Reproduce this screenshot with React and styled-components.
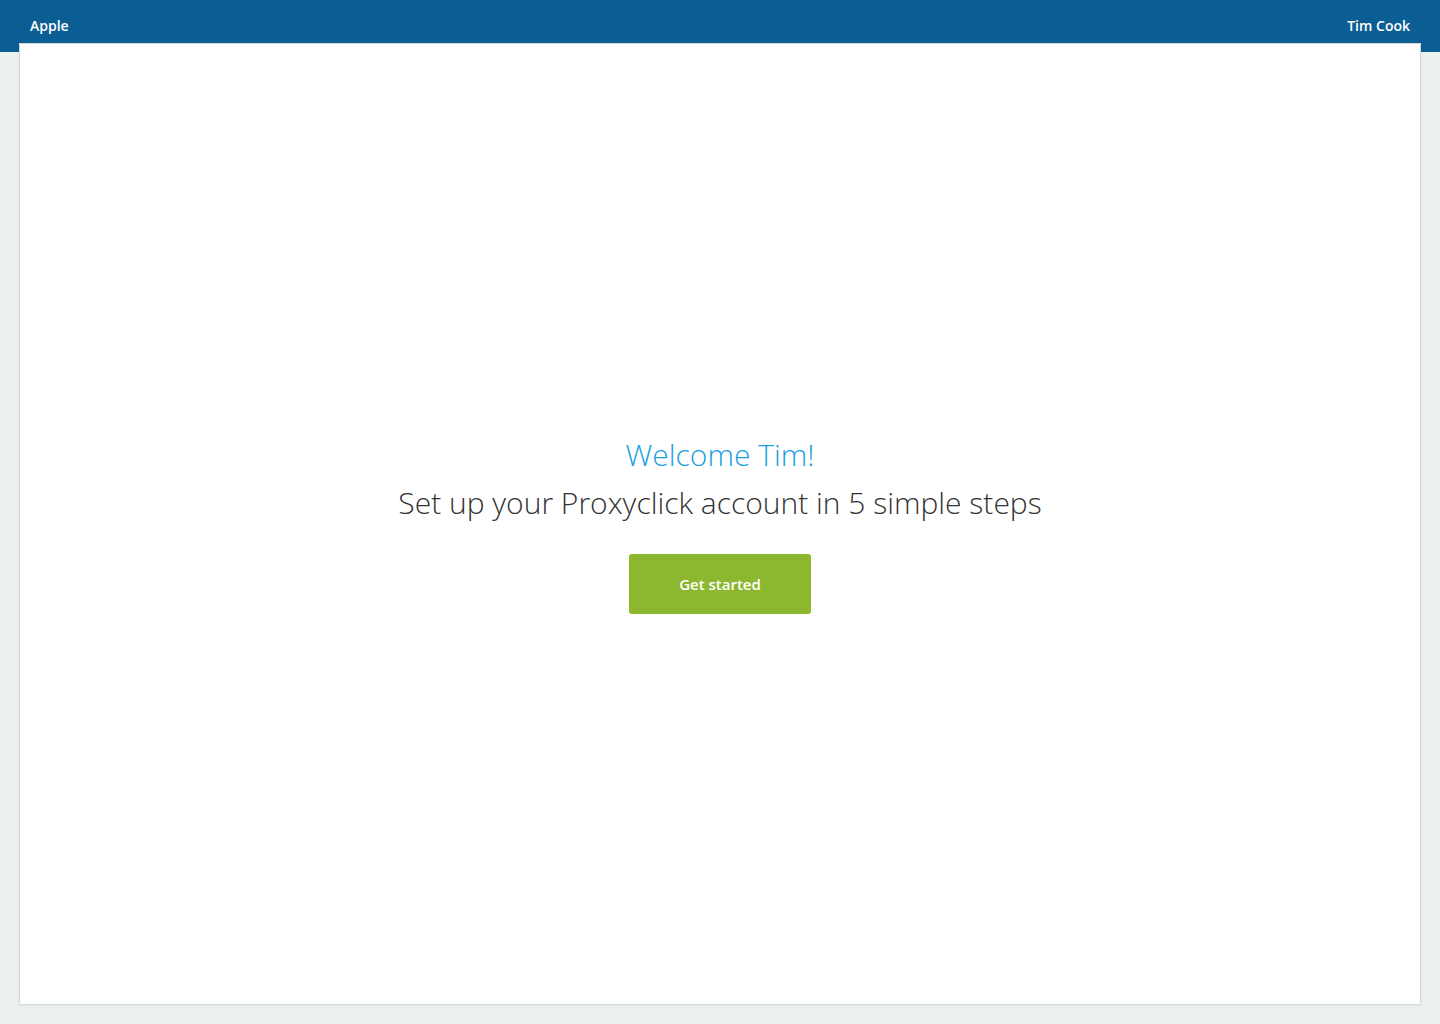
import React from 'react';
import styled, { createGlobalStyle } from 'styled-components';

const GlobalStyle = createGlobalStyle`
  html, body {
    margin: 0;
    padding: 0;
    background: #ecf0f1;
    font-family: "Open Sans", "Liberation Sans", sans-serif;
  }
  * { box-sizing: border-box; }
`;

const Page = styled.div`
  min-height: 1024px;
  display: flex;
  flex-direction: column;
`;

const TopBar = styled.header`
  background: #0b5e93;
  height: 52px;
  padding: 0 30px;
  display: flex;
  align-items: center;
  justify-content: space-between;
  color: #ffffff;
  font-size: 14px;
  font-weight: 600;
`;

const BarLabel = styled.span`
  line-height: 20px;
`;

const Panel = styled.main`
  margin: -9px 19px 19px 19px;
  height: 962px;
  background: #ffffff;
  border: 1px solid #d3d8da;
  box-shadow: 0 1px 3px rgba(0, 0, 0, 0.06);
  display: flex;
  flex-direction: column;
  align-items: center;
  justify-content: center;
`;

const Title = styled.h1`
  margin: 0;
  font-size: 30px;
  font-weight: 300;
  color: #1a9ee2;
  line-height: 40px;
`;

const Subtitle = styled.h2`
  margin: 8px 0 0;
  font-size: 30px;
  font-weight: 300;
  color: #333333;
  line-height: 40px;
`;

const PrimaryButton = styled.button`
  margin-top: 31px;
  width: 182px;
  height: 60px;
  border: none;
  border-radius: 3px;
  background: #8cb82f;
  color: #ffffff;
  font-family: "Open Sans", "Liberation Sans", sans-serif;
  font-size: 15px;
  font-weight: 600;
  cursor: pointer;
`;

export default function App() {
  return (
    <>
      <GlobalStyle />
      <Page>
        <TopBar>
          <BarLabel>Apple</BarLabel>
          <BarLabel>Tim Cook</BarLabel>
        </TopBar>
        <Panel>
          <Title>Welcome Tim!</Title>
          <Subtitle>Set up your Proxyclick account in 5 simple steps</Subtitle>
          <PrimaryButton>Get started</PrimaryButton>
        </Panel>
      </Page>
    </>
  );
}
